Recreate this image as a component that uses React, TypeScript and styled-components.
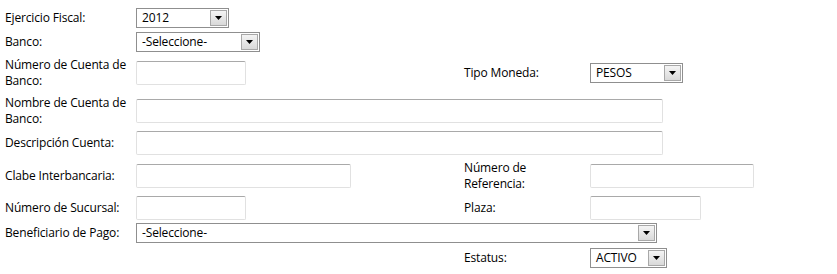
import React from "react";
import styled, { createGlobalStyle } from "styled-components";

const GlobalStyle = createGlobalStyle`
  html, body {
    margin: 0;
    padding: 0;
    background: #ffffff;
  }
  body {
    font-family: "Open Sans", "Noto Sans", sans-serif;
    font-size: 12px;
    letter-spacing: -0.15px;
    color: #000;
  }
`;

const Form = styled.div`
  display: grid;
  grid-template-columns: 131px 328px 126px 1fr;
  grid-template-rows: 24px 24px 38px 38px 26px 40px 24px 26px 24px;
  align-items: center;
  padding: 6px 0 0 5px;
`;

const Label = styled.div`
  line-height: 16px;
  white-space: nowrap;
`;

const Cell = styled.div<{ $span?: number }>`
  display: flex;
  align-items: center;
  grid-column: ${(p) => (p.$span ? `span ${p.$span}` : "auto")};
`;

const TextBox = styled.input<{ $w: number }>`
  box-sizing: border-box;
  width: ${(p) => p.$w}px;
  height: 24px;
  margin: 0;
  padding: 2px 4px;
  border: 1px solid #e1e1e1;
  border-top-color: #a9a9a9;
  border-radius: 2px;
  font: inherit;
  background: #fff;
`;

const SelectBox = styled.div<{ $w: number }>`
  box-sizing: border-box;
  width: ${(p) => p.$w}px;
  height: 20px;
  border: 1px solid #8f8f8f;
  display: flex;
  align-items: center;
  background: #fff;
`;

const SelectText = styled.span`
  flex: 1;
  padding-left: 5px;
  line-height: 18px;
  overflow: hidden;
  white-space: nowrap;
`;

const ArrowButton = styled.span`
  box-sizing: border-box;
  width: 17px;
  height: 16px;
  margin-right: 1px;
  border: 1px solid #a8a8a8;
  background: linear-gradient(#f4f4f4, #d9d9d9);
  display: flex;
  align-items: center;
  justify-content: center;
`;

const Select = ({ w, value }: { w: number; value: string }) => (
  <SelectBox $w={w}>
    <SelectText>{value}</SelectText>
    <ArrowButton>
      <svg width="7" height="4" viewBox="0 0 7 4">
        <path d="M0 0 H7 L3.5 4 Z" fill="#000" />
      </svg>
    </ArrowButton>
  </SelectBox>
);

const Empty = styled.div``;

export default function App() {
  return (
    <>
      <GlobalStyle />
      <Form>
        <Label>Ejercicio Fiscal:</Label>
        <Cell $span={3}>
          <Select w={93} value="2012" />
        </Cell>

        <Label>Banco:</Label>
        <Cell $span={3}>
          <Select w={124} value="-Seleccione-" />
        </Cell>

        <Label>
          Número de Cuenta de
          <br />
          Banco:
        </Label>
        <Cell>
          <TextBox $w={110} />
        </Cell>
        <Label>Tipo Moneda:</Label>
        <Cell>
          <Select w={93} value="PESOS" />
        </Cell>

        <Label>
          Nombre de Cuenta de
          <br />
          Banco:
        </Label>
        <Cell $span={3}>
          <TextBox $w={527} />
        </Cell>

        <Label>Descripción Cuenta:</Label>
        <Cell $span={3}>
          <TextBox $w={527} />
        </Cell>

        <Label>Clabe Interbancaria:</Label>
        <Cell>
          <TextBox $w={215} />
        </Cell>
        <Label>
          Número de
          <br />
          Referencia:
        </Label>
        <Cell>
          <TextBox $w={164} />
        </Cell>

        <Label>Número de Sucursal:</Label>
        <Cell>
          <TextBox $w={110} />
        </Cell>
        <Label>Plaza:</Label>
        <Cell>
          <TextBox $w={111} />
        </Cell>

        <Label>Beneficiario de Pago:</Label>
        <Cell $span={3}>
          <Select w={521} value="-Seleccione-" />
        </Cell>

        <Empty />
        <Empty />
        <Label>Estatus:</Label>
        <Cell>
          <Select w={77} value="ACTIVO" />
        </Cell>
      </Form>
    </>
  );
}
